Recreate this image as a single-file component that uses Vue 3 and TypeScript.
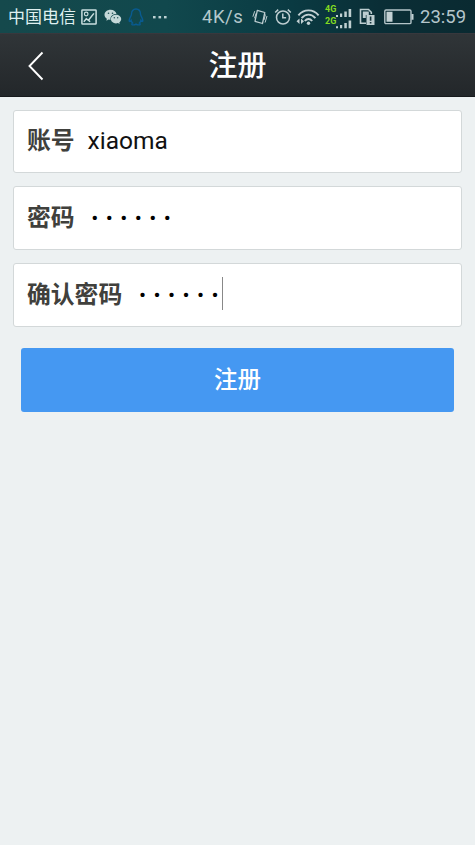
<script setup lang="ts">
interface Field {
  label: string
  value: string
  secret: boolean
  focused: boolean
}

const fields: Field[] = [
  { label: '账号', value: 'xiaoma', secret: false, focused: false },
  { label: '密码', value: '••••••', secret: true, focused: false },
  { label: '确认密码', value: '••••••', secret: true, focused: true },
]
</script>

<template>
  <div class="screen">
    <div class="status">
      <span class="carrier">中国电信</span>
      <svg class="picture" width="16" height="16" viewBox="0 0 16 16" fill="none" stroke="#c9dedf" stroke-width="1.5">
        <rect x="0.9" y="0.9" width="14.2" height="14.2" rx="0.6" />
        <circle cx="5.2" cy="5" r="1.8" stroke-width="1.2" />
        <path d="M2.8 12.7 5.3 9.8 7.5 11.3 12.9 4.4M7.5 11.3l1.6 1.5" />
      </svg>
      <svg class="wechat" width="18" height="16" viewBox="0 0 18 16">
        <path fill="#c4d7d8" d="M6.6.8C3.1.8.5 3 .5 5.8c0 1.7.9 3 2.4 4l-.5 2 2.2-1.2c.7.2 1.3.2 2 .2-.7-3.2 2.2-6 5.9-5.7C12 2.6 9.600.8 6.600.8z" />
        <path fill="#c4d7d8" d="M12 5.800c-2.900 0-5.100 1.900-5.100 4.300s2.200 4.300 5.100 4.300c.7 0 1.300-.1 1.900-.3l1.800 1-.4-1.700c1.200-.8 1.900-2 1.900-3.300 0-2.400-2.300-4.300-5.200-4.300z" />
        <g fill="#204f55"><circle cx="4.500" cy="4.200" r=".8" /><circle cx="8.500" cy="4.200" r=".8" /><circle cx="10.300" cy="8.800" r=".7" /><circle cx="13.700" cy="8.800" r=".7" /></g>
      </svg>
      <svg class="penguin" width="16" height="18" viewBox="0 0 16 18" fill="none" stroke="#095b91" stroke-width="1.400">
        <path d="M8 1C5 1 3.500 3.200 3.500 6.300 3.500 7.800 1.200 10 1.200 12.700c0 1.200 1.100.8 1.900-.4.300 1.200.8 2 1.500 2.700-1.300.7-1 1.900.6 1.900 1.400 0 2.200-.3 2.800-.8.600.5 1.400.8 2.800.8 1.600 0 1.900-1.200.6-1.900.7-.7 1.200-1.500 1.500-2.700.8 1.200 1.900 1.600 1.900.4 0-2.700-2.300-4.900-2.300-6.400C12.500 3.200 11 1 8 1z" />
      </svg>
      <svg class="more" width="16" height="4" viewBox="0 0 16 4" fill="#bcd1d3">
        <rect x="1" y="1" width="2.600" height="2.400" /><rect x="6.500" y="1" width="2.600" height="2.400" /><rect x="12" y="1" width="2.600" height="2.400" />
      </svg>
      <span class="speed">4K/s</span>
      <svg class="vibrate" width="16" height="18" viewBox="0 0 16 18" fill="none" stroke="#bdcdd0" stroke-width="1.300">
        <path d="M5.300 2.300 12.800 4.500 10.500 15.500 3 13.300z" stroke-linejoin="round" />
        <path d="M2.700 3.200.9 8.700M4.200 5.200 2.500 10.300M15 8l-1.900 6.500M13.400 6.500 12 12" stroke-width="1" />
      </svg>
      <svg class="alarm" width="18" height="18" viewBox="0 0 18 18" fill="none" stroke="#bdcdd0" stroke-width="1.500">
        <circle cx="9" cy="9.500" r="6.500" />
        <path d="M8.800 5.500v4.300h3.300M1.200 4.500l3-2.900M16.800 4.500l-3-2.900" />
      </svg>
      <svg class="wifi" width="24" height="18" viewBox="0 0 24 18" fill="none" stroke="#c3d1d4" stroke-width="1.900">
        <path d="M2.400 7.300C7.800.7 17.200.7 22.600 7.300M5.600 10.100c3.900-4.700 9.900-4.700 13.800 0M8.800 13c2.200-2.600 5.200-2.600 7.400 0" />
        <circle cx="12.500" cy="15.200" r="1.700" fill="#c3d1d4" stroke="none" />
        <path d="M3.500 10.500v5.500L.5 13.200zM5 10.500v5.500l3-2.800z" fill="#c3d1d4" stroke="none" />
      </svg>
      <div class="cell">
        <div class="net"><span>4G</span><span>2G</span></div>
        <svg class="bars" width="18" height="22" viewBox="0 0 18 22" fill="#bfcfd1">
          <path d="M1 8h2v2H1zM5 6.500h2.200V10H5zM9.300 4.500h2.500V10H9.300zM13.600 2h2.600v8h-2.600zM1 19.300h2v2H1zM5 18h2.200v3.300H5zM9.300 16h2.500v5.300H9.300zM13.600 13.500h2.600v7.800h-2.600z" />
        </svg>
      </div>
      <svg class="sim" width="16" height="18" viewBox="0 0 16 18">
        <path fill="none" stroke="#bdcdd0" stroke-width="1.600" d="M7 15.200H1.500V1.500H9.500L12.300 4.300V6" />
        <path fill="#bdcdd0" d="M3.800 3.500h6v3.500h-3v3h-3zM7.500 7h8v10h-8z" />
        <path fill="#16333b" d="M10.800 8.500h1.600v4.300h-1.600zM10.800 14h1.600v1.600h-1.600z" />
      </svg>
      <svg class="battery" width="30" height="16" viewBox="0 0 30 16">
        <rect x=".8" y="1" width="26.200" height="13.600" rx="1.200" fill="none" stroke="#b5c5c9" stroke-width="1.400" />
        <path fill="#c3d1d4" d="M2.500 2.800h6v10h-6zM27.500 5h2v5.800h-2z" />
      </svg>
      <span class="clock">23:59</span>
    </div>

    <header class="header">
      <svg class="back" width="18" height="30" viewBox="0 0 18 30" fill="none" stroke="#fff" stroke-width="1.900">
        <path d="M15.500 1.500 2.500 15 15.500 28.500" />
      </svg>
      <h1>注册</h1>
    </header>

    <main class="form">
      <div v-for="field in fields" :key="field.label" class="field">
        <label>{{ field.label }}</label>
        <div v-if="field.secret" class="secret">
          <span v-for="(dot, i) in field.value.split('')" :key="i">{{ dot }}</span>
        </div>
        <span v-else class="value">{{ field.value }}</span>
        <i v-if="field.focused" class="caret"></i>
      </div>
      <button class="submit" type="button">注册</button>
    </main>
  </div>
</template>

<style>
body {
  background: #edf1f2;
}
</style>

<style scoped>
.screen {
  box-sizing: border-box;
  height: 845px;
  overflow: hidden;
  background: #edf1f2;
  font-family: Roboto, "Noto Sans CJK SC", sans-serif;
}
.status {
  display: flex;
  align-items: center;
  box-sizing: border-box;
  height: 33px;
  padding-left: 8px;
  background: linear-gradient(90deg, #15494c 0%, #11484d 35%, #0a3b43 60%, #0a2e36 80%, #0a2a31 100%);
  white-space: nowrap;
}
.status > * {
  flex: none;
}
.carrier {
  width: 73px;
  color: #dff0f0;
  font-size: 17px;
  line-height: 32px;
}
.wechat {
  margin-left: 7px;
}
.penguin {
  margin-left: 6px;
}
.more {
  margin-left: 8px;
}
.speed {
  width: 50px;
  margin-left: 34px;
  color: #b4c8cc;
  font-size: 18.500px;
  letter-spacing: 0.500px;
  line-height: 33px;
  padding-top: 1px;
}
.alarm {
  margin-left: 6px;
}
.wifi {
  margin-left: 4px;
}
.cell {
  display: flex;
  align-items: center;
  width: 30px;
  height: 26px;
  margin-left: 5px;
}
.net {
  display: flex;
  flex-direction: column;
  width: 10px;
  margin-top: -4px;
  color: #83da22;
  font-size: 9px;
  font-weight: 700;
  line-height: 12px;
}
.bars {
  margin-top: 3px;
}
.sim {
  margin-left: 4px;
}
.battery {
  margin-left: 9px;
}
.clock {
  margin-left: 6px;
  color: #b5c6cb;
  font-size: 18.500px;
  line-height: 33px;
  padding-top: 1px;
}
.header {
  display: grid;
  grid-template-columns: 48px 1fr 48px;
  align-items: center;
  box-sizing: border-box;
  height: 64px;
  padding-top: 1px;
  border-top: 1px solid #38383d;
  border-bottom: 1px solid #171a1d;
  background: linear-gradient(#303538, #23272a);
}
.back {
  margin-left: 27px;
}
h1 {
  margin: 0;
  color: #fff;
  font-size: 29px;
  font-weight: 500;
  line-height: 60px;
  text-align: center;
}
.form {
  display: flex;
  flex-direction: column;
  gap: 13px;
  padding: 12.500px 13px;
}
.field {
  display: flex;
  align-items: center;
  box-sizing: border-box;
  height: 63.700px;
  padding-left: 13px;
  border: 1px solid #d3d8d9;
  border-radius: 3px;
  background: #fff;
}
label {
  color: #40403c;
  font-size: 23.800px;
  font-weight: 700;
  line-height: 60px;
}
.value {
  margin-left: 13px;
  color: #111;
  font-size: 24.500px;
  line-height: 60px;
}
.secret {
  display: flex;
  margin-left: 13px;
  color: #000;
  font-size: 21px;
  line-height: 60px;
}
.secret span {
  width: 14.500px;
  text-align: center;
}
.caret {
  width: 1px;
  height: 33px;
  margin-top: -3px;
  background: #888;
}
.submit {
  height: 64px;
  margin: 8px 8px 0;
  padding: 0;
  border: 0;
  border-radius: 3px;
  background: #4598f2;
  color: #fff;
  font: 500 23.500px/64px Roboto, "Noto Sans CJK SC", sans-serif;
}
</style>
